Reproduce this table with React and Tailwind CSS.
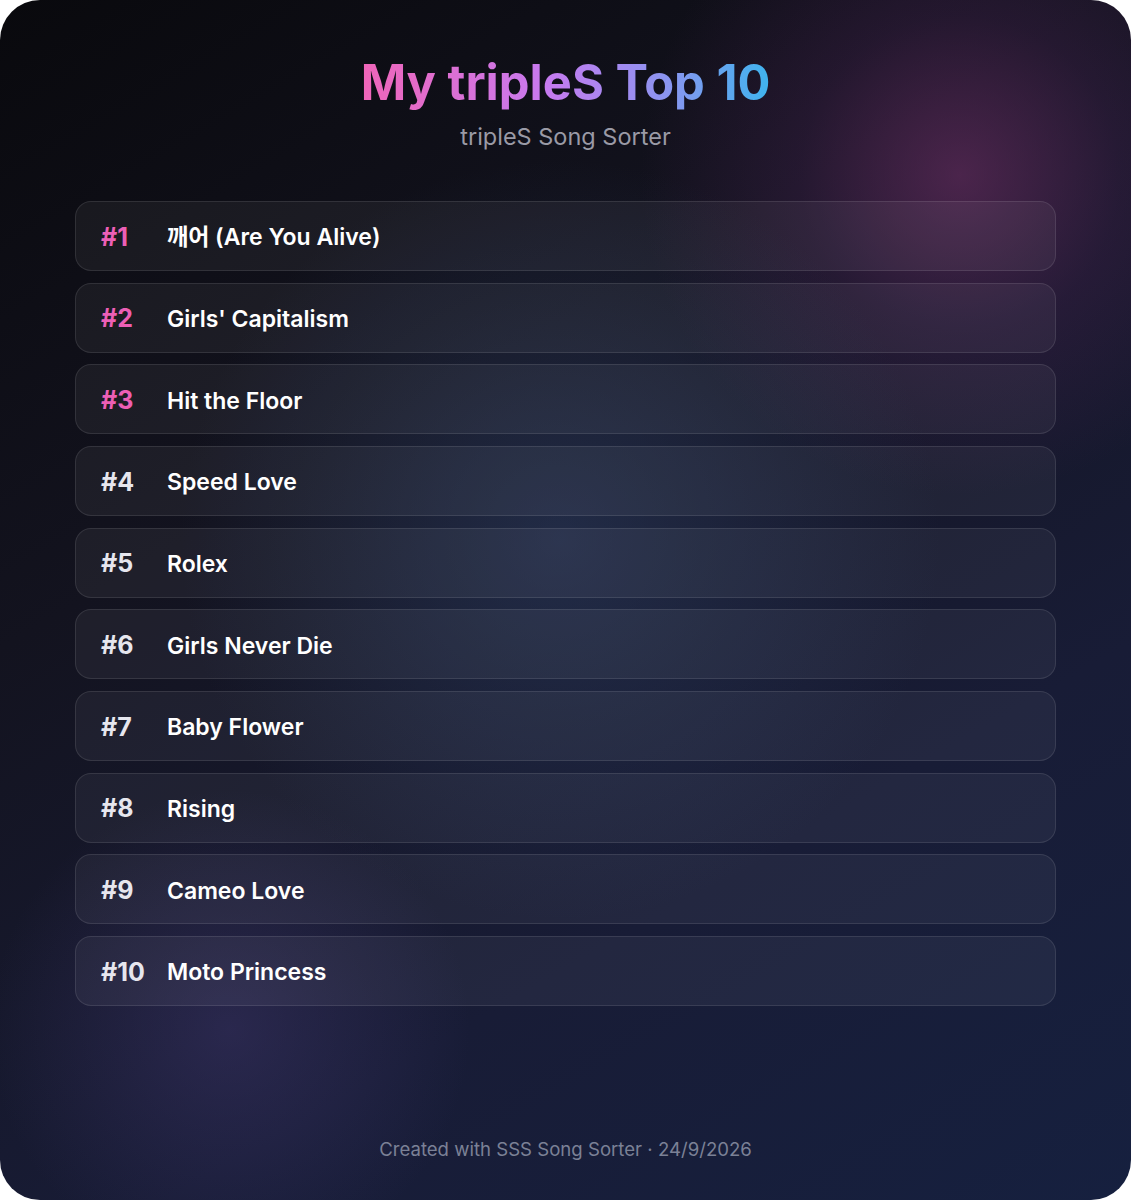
// tripleS Top 10 share card: title, ranked song list, footer.
const songs = [
  '깨어 (Are You Alive)',
  "Girls' Capitalism",
  'Hit the Floor',
  'Speed Love',
  'Rolex',
  'Girls Never Die',
  'Baby Flower',
  'Rising',
  'Cameo Love',
  'Moto Princess',
]

export default function App() {
  return (
    <div className="bg-white" style={{ fontFamily: 'Inter, "Noto Sans CJK KR", sans-serif' }}>
      <div className="relative h-[1200px] w-[1131px] overflow-hidden rounded-[40px] bg-[linear-gradient(150deg,#09090d_0%,#13131f_35%,#181c36_70%,#16203f_100%)]">
        {/* soft glows */}
        <div className="pointer-events-none absolute inset-0 bg-[radial-gradient(circle_at_960px_175px,rgba(120,50,110,0.55)_0px,rgba(90,40,100,0.25)_160px,transparent_320px)]" />
        <div className="pointer-events-none absolute inset-0 bg-[radial-gradient(circle_at_560px_540px,rgba(50,70,110,0.45)_0px,transparent_380px)]" />
        <div className="pointer-events-none absolute inset-0 bg-[radial-gradient(circle_at_230px_1030px,rgba(70,60,120,0.4)_0px,transparent_240px)]" />

        <div className="relative flex h-full flex-col items-center px-[75px]">
          <h1 className="mt-[53px] bg-[linear-gradient(90deg,#f065b8_0%,#c77af0_45%,#8a95f0_75%,#3fb4ee_100%)] bg-clip-text text-[48.8px] font-bold leading-[60px] text-transparent">
            My tripleS Top 10
          </h1>
          <p className="mt-[10px] text-[23.5px] leading-[28px] text-[#9a9aa6]">tripleS Song Sorter</p>

          <ol className="mt-[50px] flex w-full flex-col gap-[11.67px]">
            {songs.map((s, i) => (
              <li
                key={s}
                className="flex h-[70px] items-center rounded-[16px] border border-white/10 bg-white/[0.05] px-[25px] pt-[3px]"
              >
                <span className={`w-[66px] text-[25px] font-bold ${i < 3 ? 'text-[#ec5fb6]' : 'text-[#e6e6ee]'}`}>#{i + 1}</span>
                <span className="text-[23px] font-semibold text-white">{s}</span>
              </li>
            ))}
          </ol>

          <p className="mt-auto mb-[36px] text-[18.6px] text-[#7b8196]">Created with SSS Song Sorter · 24/9/2026</p>
        </div>
      </div>
    </div>
  )
}
